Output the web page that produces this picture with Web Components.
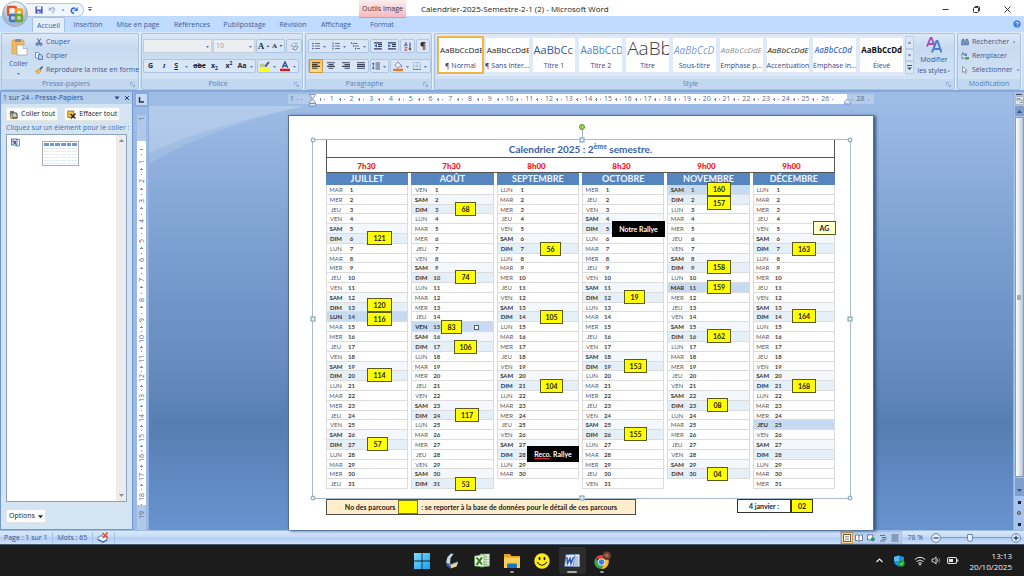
<!DOCTYPE html>
<html lang="fr">
<head>
<meta charset="utf-8">
<title>Calendrier-2025-Semestre-2-1 (2) - Microsoft Word</title>
<style>
html,body{margin:0;height:100%;overflow:hidden}
body{font:7px/10px "Open Sans","Noto Sans",sans-serif;color:#3a5795}
</style>
</head>
<body>
<word-app></word-app>
<script>
const RESET = `*{box-sizing:border-box}
button,input,select{font:inherit;color:inherit;margin:0;padding:0;border:0;background:none}
a{color:inherit;text-decoration:none}`;

function define(name, css, html, setup) {
  const t = document.createElement('template');
  t.innerHTML = `<style>${RESET}${css}</style>${typeof html === 'string' ? html : ''}`;
  customElements.define(name, class extends HTMLElement {
    connectedCallback() {
      if (this.shadowRoot) return;
      const root = this.attachShadow({ mode: 'open' });
      root.append(t.content.cloneNode(true));
      if (typeof html === 'function') root.innerHTML += html(this);
      if (setup) setup(this, root);
    }
  });
}

/* ---------- icons ---------- */
const ICONS = {
  office: ['0 0 26 26', `<defs><radialGradient id="g" cx=".5" cy=".3"><stop offset="0" stop-color="#fff"/><stop offset=".6" stop-color="#dfe7f1"/><stop offset="1" stop-color="#a9b9cf"/></radialGradient></defs><circle cx="13" cy="13" r="12.5" fill="url(#g)" stroke="#8fa5c4" stroke-width=".8"/><g fill="none" stroke-width="2.400"><rect x="6" y="6" width="8" height="8" rx="1" stroke="#e0561d"/><rect x="14" y="8.500" width="6" height="5.500" rx="1" stroke="#f0a21d"/><rect x="8" y="14" width="6" height="6" rx="1" stroke="#3f7cc7"/><rect x="14" y="14" width="6" height="6" rx="1" stroke="#6aa72d"/></g>`],
  save: ['0 0 9 9', `<path d="M.5.5h8v8h-8z" fill="#3f52a8"/><path d="M2 .5h5v3.500H2z" fill="#f4f6ff"/><path d="M2.500 5.500h4v3h-4z" fill="#c5cff0"/><path d="M5 6h1v2H5z" fill="#3f52a8"/>`],
  undo: ['0 0 9 9', `<path d="M2.500 3.500Q6 .5 7.300 3.500 7.500 6 4.500 8" fill="none" stroke="#9fb4d8" stroke-width="1.600"/><path d="M.8 1v4.200h4.200z" fill="#9fb4d8"/>`],
  redo: ['0 0 9 9', `<path d="M6 3A2.800 2.800 0 1 0 4.500 8" fill="none" stroke="#2f6fd6" stroke-width="1.800"/><path d="M8.700 1v4.500H4.200z" fill="#2f6fd6"/>`],
  down: ['0 0 5 5', `<path d="M1 2h3L2.500 4z" fill="#5b79ad"/>`],
  downdark: ['0 0 6 6', `<path d="M0 1.500h6L3 5z" fill="#222"/>`],
  more: ['0 0 5 7', `<path d="M0 1h5v1H0zM0 3.500h5L2.500 6z" fill="#3b4f7c"/>`],
  paste: ['0 0 18 18', `<rect x="2" y="2" width="12" height="14" rx="1" fill="#efb95c" stroke="#d39a43" stroke-width=".6"/><rect x="5" y="1" width="6" height="3" rx="1" fill="#8b8f97"/><path d="M7 7h6l4 3.500V17H7z" fill="#fff" stroke="#8f9cb5" stroke-width=".7"/><path d="M13 7v3.500h4" fill="#dde6f5" stroke="#8f9cb5" stroke-width=".6"/>`],
  cut: ['0 0 8 8', `<path d="M2.200.5 5 5.300M5.800.5 3 5.300" stroke="#5a6a8c" stroke-width="1"/><circle cx="2.200" cy="6.200" r="1.200" fill="none" stroke="#2c52a0"/><circle cx="5.800" cy="6.200" r="1.200" fill="none" stroke="#2c52a0"/>`],
  copy: ['0 0 8 8', `<path d="M.5.5h3l1.500 1.500v4h-4.500z" fill="#fff" stroke="#5576b8" stroke-width=".8"/><path d="M3.500 2.500h2.500l1.500 1.500v3.500h-4z" fill="#b9cdf0" stroke="#3d62ad" stroke-width=".8"/>`],
  brush: ['0 0 8 8', `<path d="M7.500.5 4.500 4" stroke="#4b5f94" stroke-width="1.600"/><path d="M.5 5 4.500 2.700l1.700 2.300L3 8z" fill="#f3bf45" stroke="#8d6b25" stroke-width=".4"/>`],
  clear: ['0 0 10 10', `<path d="M1 4.500 4 1.500h4L5 4.500z" fill="#fff" stroke="#6c7fa8" stroke-width=".7"/><path d="M3 8l3-3.500 3 1L6.500 9z" fill="#e7ecf7" stroke="#56678e" stroke-width=".8"/>`],
  bullets: ['0 0 8 8', `<path d="M3 1.500h5M3 4h5M3 6.500h5" stroke="#57698f" stroke-width=".9"/><path d="M.3 1h1.400v1.200H.3zM.3 3.500h1.400v1.200H.3zM.3 6h1.400v1.200H.3z" fill="#2b55b0"/>`],
  numbers: ['0 0 8 8', `<path d="M3 1.500h5M3 4h5M3 6.500h5" stroke="#57698f" stroke-width=".9"/><path d="M1 .3v2M1 3v2M1 5.700v2" stroke="#2b55b0" stroke-width=".9"/>`],
  levels: ['0 0 9 8', `<path d="M1.500 1.500h5M4 4h4M6 6.500h3" stroke="#57698f" stroke-width=".9"/><path d="M.3 0v2M2.600 3v2M4.600 5.700v2" stroke="#2b55b0" stroke-width=".9"/>`],
  outdent: ['0 0 8 8', `<path d="M0 .8h8M4 2.700h4M4 4.500h4M0 6.800h8" stroke="#333f5c" stroke-width="1.200"/><path d="M3 2v3.400L.3 3.700z" fill="#2b55b0"/>`],
  indent: ['0 0 8 8', `<path d="M0 .8h8M4 2.700h4M4 4.500h4M0 6.800h8" stroke="#333f5c" stroke-width="1.200"/><path d="M.3 2v3.400L3 3.700z" fill="#2b55b0"/>`],
  sort: ['0 0 8 9', `<path d="M.5 4l1.400-3.500L3.300 4M.8 3h2.200" stroke="#2b55b0" fill="none" stroke-width=".8"/><path d="M.6 5.200h2.600L.6 8.300h2.800" stroke="#b0323a" fill="none" stroke-width=".8"/><path d="M6 .5v7" stroke="#333" stroke-width=".9"/><path d="M4.500 6.500h3L6 8.800z" fill="#333"/>`],
  left: ['0 0 8 8', `<path d="M0 .8h8M0 2.600h5.500M0 4.400h8M0 6.200h5.500" stroke="#3c3527" stroke-width="1.100"/>`],
  center: ['0 0 8 8', `<path d="M0 .8h8M1.500 2.600h5M0 4.400h8M1.500 6.200h5" stroke="#3d4963" stroke-width="1.100"/>`],
  right: ['0 0 8 8', `<path d="M0 .8h8M2.500 2.600H8M0 4.400h8M2.500 6.200H8" stroke="#3d4963" stroke-width="1.100"/>`],
  justify: ['0 0 8 8', `<path d="M0 .8h8M0 2.600h8M0 4.400h8M0 6.200h8" stroke="#3d4963" stroke-width="1.100"/>`],
  spacing: ['0 0 8 8', `<path d="M3.500 1h4.500M3.500 3h4.500M3.500 5h4.500M3.500 7h4.500" stroke="#3d4963" stroke-width=".9"/><path d="M1.300 1v6" stroke="#2b55b0" stroke-width=".8"/><path d="M0 2.300h2.600L1.300.3zM0 5.700h2.600L1.300 7.700z" fill="#2b55b0"/>`],
  fill: ['0 0 11 11', `<path d="M2 4.500 5.500 1 9 4.500 5.500 8z" fill="#e8eefa" stroke="#5f7199" stroke-width=".8"/><path d="M9 4q1.500 2 .5 3.500-1-.5-.5-3.500z" fill="#2b55b0"/><path d="M0 8.500h11V11H0z" fill="#ee7a1c"/>`],
  borders: ['0 0 8 8', `<path d="M.5.5h7v7h-7zM4 .5v7M.5 4h7" fill="none" stroke="#a9bad6" stroke-width=".8"/><path d="M0 7.500h8" stroke="#7389b5"/>`],
  marker: ['0 0 11 11', `<path d="M5 5.500 9 .8l1.300 1L6.500 6.500z" fill="#4d5d86" stroke="#4d5d86" stroke-width=".6"/><path d="M0 3h5v3.500H0z" fill="#c3c68a"/><path d="M0 8h11v3H0z" fill="#ff0"/>`],
  fontcolor: ['0 0 11 11', `<path d="M0 8.500h11V11H0z" fill="#f40f0f"/><path d="M2.500 7.500 5.500.8l3 6.700M3.700 5.500h3.600" fill="none" stroke="#38538f" stroke-width="1.500"/>`],
  launcher: ['0 0 5 5', `<path d="M.5 3.500v-3h3M2 2l2.500 2.500M4.500 2.500v2h-2" fill="none" stroke="#7f9cc6" stroke-width=".7"/>`],
  styles: ['0 0 16 16', `<path d="M1 9.500 4.500 1h1L9 9.500M2.300 7h5" fill="none" stroke="#a64bb8" stroke-width="1.800"/><path d="M6 15.500 10.500 4h1L15.500 15.500M8 12h6" fill="none" stroke="#4a7fd0" stroke-width="2"/>`],
  find: ['0 0 8 7', `<path d="M.5 6.500V3L1.500.5h1.300L3.500 3v3.500zM4.500 6.500V3L5.200.5h1.300L7.500 3v3.500z" fill="#7690bf" stroke="#3e5b95" stroke-width=".5"/>`],
  replace: ['0 0 8 8', `<path d="M.5 3.500 1.800.5 3 3.500M4 1v2.500h1.500V2H4" stroke="#3e5b95" fill="none" stroke-width=".7"/><path d="M1 4.500v2h2" fill="none" stroke="#3e5b95" stroke-width=".7"/><path d="M4 5h4v2.500H4z" fill="#52a052"/>`],
  select: ['0 0 7 8', `<path d="M1 .5v6l1.600-1.400L3.700 7.500l1-.5-1-2.300H5.800z" fill="#fff" stroke="#6a7a9c" stroke-width=".7"/>`],
  min: ['0 0 9 9', `<path d="M1.500 4.500h6" stroke="#333" stroke-width="1"/>`],
  restore: ['0 0 9 9', `<rect x="1.500" y="2.500" width="5" height="5" rx="1" fill="none" stroke="#333"/><path d="M3 1.500h3.500Q7.500 1.500 7.500 3v3" fill="none" stroke="#333"/>`],
  close: ['0 0 9 9', `<path d="M1.500 1.500l6 6M7.500 1.500l-6 6" stroke="#333" stroke-width="1"/>`],
  help: ['0 0 9 9', `<circle cx="4.500" cy="4.500" r="4" fill="#3a78d8" stroke="#7ba6e8"/><path d="M3 3.500q1.500-2 3 0 0 1-1.500 1.500M4.500 6v1" stroke="#fff" fill="none"/>`],
  pasteall: ['0 0 9 9', `<path d="M1 1h4v3H1z" fill="#7d7350"/><path d="M1 3h7v5.500H2z" fill="#e9bd50" stroke="#6f6031" stroke-width=".8"/><path d="M3 3h4l1.500 4.500H4z" fill="#c6ccd6" stroke="#4d5873" stroke-width=".8"/>`],
  clearall: ['0 0 9 9', `<rect x=".8" y="1" width="6" height="6.500" fill="#f3c33c" stroke="#6f5a1d" stroke-width=".7"/><path d="M3.500 4l5 4.500M8.500 3.500 4 8.500" stroke="#26282e" stroke-width="1.300"/>`],
  clipword: ['0 0 9 9', `<path d="M4 1.500h4.500v6.500H5z" fill="#fff" stroke="#6c7ea6" stroke-width=".9"/><rect x=".5" y="1" width="5.500" height="6" fill="#dbe6fa" stroke="#3b5fae" stroke-width=".8"/><path d="M1.500 2.500h2v2h-2z" fill="#d4542a"/><path d="M3.300 3h1.700v3H2.500z" fill="#3a62b5"/>`],
  tabstop: ['0 0 6 6', `<path d="M1.500 0v5H6" fill="none" stroke="#333" stroke-width="1.500"/>`],
  hourglass: ['0 0 7 14', `<path d="M.5 1.500h6L3.500 6z" fill="#eef4fc" stroke="#7289b3" stroke-width=".8"/><path d="M3.500 6 6.500 9v1.500h-6V9zM.5 10.500h6v2.500h-6z" fill="#dce7f6" stroke="#7289b3" stroke-width=".8"/>`],
  rightindent: ['0 0 7 7', `<path d="M3.500 1 6.500 4v2h-6V4z" fill="#dce7f6" stroke="#7289b3" stroke-width=".8"/>`],
  spell: ['0 0 12 11', `<path d="M1 5l4-1.500 1 1.500 4-1v4L6 10 1 8z" fill="#f4f6fa" stroke="#566b9c" stroke-width=".8"/><path d="M1 7.500 6 10l4-2" fill="none" stroke="#2f60c0" stroke-width="1.200"/><path d="M5.500 1l5 5M10.500.5l-4.500 5.500" stroke="#f2472d" stroke-width="1.500"/>`],
  vprint: ['0 0 8 8', `<rect x=".5" y=".5" width="7" height="7" fill="#fff" stroke="#686353"/><path d="M2 2.500h4M2 4h4M2 5.500h4" stroke="#8b8573" stroke-width=".7"/>`],
  vread: ['0 0 8 8', `<path d="M4 2v5.500M.5 1Q3 .5 4 2 5 .5 7.500 1v5.500Q5 6 4 7.500 3 6 .5 6.500z" fill="#fff" stroke="#62728f" stroke-width=".9"/>`],
  vweb: ['0 0 9 8', `<rect x=".5" y=".5" width="6" height="5.500" fill="#fff" stroke="#62728f"/><circle cx="6.500" cy="5.500" r="2.300" fill="#2d8f8f"/>`],
  vplan: ['0 0 8 8', `<path d="M1 1.500h5M3 3.500h4.500M3 5.200h4.500M1 7h5" stroke="#5d6d8d" stroke-width="1"/>`],
  vdraft: ['0 0 8 8', `<path d="M.5 1h7M.5 3h7M.5 5h7M.5 7h7" stroke="#57678a" stroke-width="1.100"/>`],
  minus: ['0 0 10 10', `<circle cx="5" cy="5" r="4.400" fill="#e6effb" stroke="#6382b5"/><path d="M2.500 5h5" stroke="#33456d" stroke-width="1.300"/>`],
  plus: ['0 0 10 10', `<circle cx="5" cy="5" r="4.400" fill="#e6effb" stroke="#6382b5"/><path d="M2.500 5h5M5 2.500v5" stroke="#33456d" stroke-width="1.300"/>`],
  win: ['0 0 16 16', `<defs><linearGradient id="w" x2="1" y2="1"><stop offset="0" stop-color="#7fdcff"/><stop offset="1" stop-color="#18a0ee"/></linearGradient></defs><path d="M0 0h7.600v7.600H0zM8.400 0H16v7.600H8.400zM0 8.400h7.600V16H0zM8.400 8.400H16V16H8.400z" fill="url(#w)"/>`],
  moon: ['0 0 16 16', `<path d="M7 .5 3.500 4 2 9.500 4 14l2-2.500L6.500 5 9.500 1z" fill="#c9d6e6"/><path d="M3 9.500 7 11l6.500-2.500.5 1.500-7.500 3.500z" fill="#8ca3c4"/><path d="M2 9l3.500 2.500.5 4L3 13z" fill="#3f58b5"/><path d="M7 12.300 14 9.500l-1.500 4L6.500 15.500z" fill="#eadb95"/>`],
  excel: ['0 0 16 16', `<path d="M6 1h9.500v12L6 14z" fill="#e9f3e3" stroke="#7ea76a" stroke-width=".6"/><path d="M8 4h7M8 6.500h7M8 9h7M8 11.500h7M12 2v11" stroke="#8ab378" stroke-width=".7"/><path d="M.5 3 10 1.500v12.500L.5 13z" fill="#eef6e9" stroke="#4c8a36" stroke-width=".6"/><path d="M2.500 4.500 8 11.500M8 4.300l-5.500 7.500" stroke="#2e7d23" stroke-width="2"/>`],
  folder: ['0 0 18 16', `<path d="M1 1h6l1.500 2H17v12H1z" fill="#e3a321"/><path d="M1 4.500h16V15H1z" fill="#fccf57"/><path d="M4 15v-3.500q0-1 1-1h8q1 0 1 1V15z" fill="#1b74c4"/>`],
  smile: ['0 0 16 16', `<circle cx="8" cy="8" r="7.700" fill="#ffec1a"/><ellipse cx="5.500" cy="5.500" rx="1" ry="1.700" fill="#222"/><ellipse cx="10.500" cy="5.500" rx="1" ry="1.700" fill="#222"/><path d="M3 9Q8 15.500 13 9" fill="none" stroke="#222" stroke-width="1.100"/>`],
  word: ['0 0 16 16', `<path d="M6 1.500h9.500v12H6z" fill="#eef3fb" stroke="#8da6cf" stroke-width=".6"/><path d="M9 4h5.500M9 6h5.500M9 8h5.500M9 10h5.500M9 12h5.500" stroke="#5d80bd" stroke-width=".8"/><path d="M2 1.500h9L9 13.500H.5z" fill="#e3ecf9" stroke="#4a6fb5" stroke-width=".7"/><path d="M2.800 4l.7 6.500L6 5.500l1 5L9.500 4" fill="none" stroke="#2b57ab" stroke-width="1.500"/>`],
  chrome: ['0 0 20 20', `<path d="M9 11 3 7A7.500 7.500 0 0 1 15.500 8H9z" fill="#e8402f"/><path d="M9 12 2.600 7.500A7.500 7.500 0 0 0 8 19l4-6z" fill="#35a853"/><path d="M9 8h6.700A7.500 7.500 0 0 1 8.500 19L12 13z" fill="#fbc116"/><circle cx="9" cy="11.500" r="3.700" fill="#fff"/><circle cx="9" cy="11.500" r="2.900" fill="#3a7de8"/><circle cx="14.500" cy="5" r="4.500" fill="#6b3d2a"/><circle cx="14.500" cy="4.500" r="2" fill="#a56b50"/>`],
  chevron: ['0 0 9 9', `<path d="M1.500 6 4.500 3l3 3" fill="none" stroke="#f2f2f2" stroke-width="1.200"/>`],
  shield: ['0 0 12 12', `<path d="M6 .5 11 2v4q0 3.500-5 5.500Q1 9.500 1 6V2z" fill="#1b8fe0"/><path d="M6 .5V6H1V2z" fill="#54bdf5"/><circle cx="8.500" cy="8.500" r="3.200" fill="#17a32b"/><path d="M7 8.500l1.200 1.200 2-2.200" fill="none" stroke="#fff" stroke-width=".8"/>`],
  wifi: ['0 0 12 10', `<g fill="none" stroke="#e6e6e6" stroke-width="1"><path d="M.8 3.500q5.200-4.500 10.400 0M2.500 5.500q3.500-3 7 0M4.200 7.300q1.800-1.500 3.600 0"/></g><circle cx="6" cy="8.600" r="1" fill="#e6e6e6"/>`],
  sound: ['0 0 12 10', `<path d="M1 3.500h2L5.500 1v8L3 6.500H1z" fill="none" stroke="#e6e6e6"/><path d="M7 3.500q1 1.500 0 3" fill="none" stroke="#e6e6e6"/><path d="M8.700 2q2 3 0 6" fill="none" stroke="#777"/>`],
  battery: ['0 0 12 9', `<rect x=".6" y="1.500" width="9" height="6" rx="1.500" fill="none" stroke="#e6e6e6" stroke-width="1.100"/><rect x="2" y="3" width="4" height="3" fill="#e6e6e6"/><path d="M10.800 3.500v2" stroke="#e6e6e6" stroke-width="1.200"/>`],
  rulertoggle: ['0 0 9 9', `<rect x=".5" y=".5" width="8" height="8" rx="1" fill="#dfe3ea" stroke="#9aa0ac" stroke-width=".6"/><path d="M2 4V2.500h2.500V4zM4.500 6.500H7V4H5" fill="#fff" stroke="#737b8c" stroke-width=".8"/>`],
  up: ['0 0 7 7', `<path d="M1 5h5L3.500 2z" fill="currentColor"/>`],
  dn: ['0 0 7 7', `<path d="M1 2h5L3.500 5z" fill="currentColor"/>`],
  smallx: ['0 0 6 6', `<path d="M1 1l4 4M5 1 1 5" stroke="#1f418f" stroke-width="1"/>`],
  paneDown: ['0 0 6 6', `<path d="M.5 1.500h5L3 4.500z" fill="#1f418f"/>`]
};
define('ui-icon', `:host{display:inline-flex;flex:none;width:var(--w,8px);height:var(--h,var(--w,8px))}svg{width:100%;height:100%;display:block}`,
  el => { const [vb, body] = ICONS[el.getAttribute('name')]; return `<svg viewBox="${vb}" aria-hidden="true">${body}</svg>`; });
const icon = (n, w = 8, h = w) => `<ui-icon name="${n}" style="--w:${w}px;--h:${h}px"></ui-icon>`;

/* ---------- title bar and tabs ---------- */
define('title-bar', `
:host{display:grid;grid-template-columns:359px 1fr auto;height:16px;background:#fff;position:relative}
.qat{display:flex;align-items:center;gap:5px;margin-left:26px;padding-left:9px;width:58px;height:14px;margin-top:1px;border:1px solid #b4c8e2;border-left:0;border-radius:0 8px 8px 0;background:#f1f6fc}
.left{display:flex;align-items:center;gap:4px}
.mid{display:flex;align-items:stretch;gap:15px}
.ctx{width:47px;text-align:center;white-space:nowrap;color:#4b2b35;background:linear-gradient(#fbeef0,#f4b9bd);border-bottom:1px solid #ee8e93;line-height:17px}
h1{margin:0;font:8px/17px "Open Sans",sans-serif;color:#222}
.win{display:flex;align-items:center;gap:22px;padding-right:12px}
.qat button,.win button{display:flex}
`, `
<div class="left"><div class="qat"><button aria-label="Enregistrer">${icon('save', 8)}</button><button aria-label="Annuler">${icon('undo', 8)}</button><ui-icon name="down" style="--w:4px"></ui-icon><button aria-label="Rétablir">${icon('redo', 8)}</button></div>${icon('more', 4, 6)}</div>
<div class="mid"><div class="ctx">Outils Image</div><h1>Calendrier-2025-Semestre-2-1 (2) - Microsoft Word</h1></div>
<div class="win"><button aria-label="Réduire">${icon('min', 9)}</button><button aria-label="Restaurer">${icon('restore', 9)}</button><button aria-label="Fermer">${icon('close', 9)}</button></div>`);

define('office-button', `:host{position:absolute;left:2px;top:1px;z-index:3}button{display:flex}`,
  `<button aria-label="Bouton Office">${icon('office', 26)}</button>`);

define('ribbon-tabs', `
:host{display:flex;height:16px;background:#bfdbff;padding-left:32px;padding-right:3px;align-items:flex-end}
nav{display:flex;flex:1}
a{height:15px;line-height:16px;text-align:center;color:#3b5b9b}
.on{background:#e5effb;border:1px solid #a3c0e5;border-bottom:0;border-radius:2px 2px 0 0;line-height:15px}
ui-icon{margin-bottom:4px}
`, `<nav>${[['Accueil', 33], ['Insertion', 46], ['Mise en page', 54], ['Références', 54], ['Publipostage', 51], ['Révision', 46], ['Affichage', 40], ['Format', 52]]
    .map(([t, w], i) => `<a href="#" class="${i === 0 ? 'on' : ''}" style="width:${w}px">${t}</a>`).join('')}</nav>${icon('help', 8)}`);

/* ---------- ribbon ---------- */
define('ribbon-group', `
:host{display:flex;flex-direction:column;height:57px;border:1px solid #a8c3e2;border-radius:2px;background:linear-gradient(#dce8f6,#c7daef 25%,#d5e5f6);box-shadow:1px 0 0 #eaf3fc}
.body{flex:1;min-height:0;padding:4px 4px 0;display:flex}
.cap{height:10px;display:flex;align-items:center;background:#c1d8f0;color:#5a80b9;line-height:10px}
.cap span{flex:1;text-align:center}
ui-icon{margin-right:3px}
`, el => `<div class="body"><slot></slot></div><div class="cap"><span>${el.getAttribute('label')}</span>${el.hasAttribute('nolaunch') ? '' : icon('launcher', 5)}</div>`);

define('tool-btn', `
:host{display:inline-flex}
button{display:flex;align-items:center;justify-content:center;gap:2px;width:var(--bw,auto);height:14px;font-family:"Open Sans",sans-serif;color:#222b40;white-space:nowrap}
:host([on]) button{background:linear-gradient(#fbc06b,#ffd987);border:1px solid #c79a4b}
:host([link]) button{justify-content:flex-start;gap:3px;color:#3a5795}
`, el => `<button aria-label="${el.getAttribute('tip') || ''}"><slot></slot></button>`, (el, root) => { if (!el.getAttribute('tip')) root.querySelector('button').removeAttribute('aria-label'); });

define('tool-set', `:host{display:inline-flex;height:14px;border:1px solid #aec6e4;border-radius:2px;background:#d8e6f6;align-items:center}`, `<slot></slot>`);

const tb = (tip, w, content, extra = '') => `<tool-btn tip="${tip}" style="--bw:${w}px" ${extra}>${content}</tool-btn>`;
const d = icon('down', 5);

define('group-clipboard', `
:host{display:block}
ribbon-group{width:138px}
.big{display:flex;flex:none;flex-direction:column;align-items:center;width:25px;gap:3px;color:#3a5795;line-height:9px}
.list{display:flex;flex-direction:column;padding-left:4px;margin-top:-3px}
`, `<ribbon-group label="Presse-papiers"><button class="big">${icon('paste', 18)}<span>Coller</span>${icon('down', 5)}</button>
<div class="list"><tool-btn link>${icon('cut')}Couper</tool-btn><tool-btn link>${icon('copy')}Copier</tool-btn><tool-btn link>${icon('brush')}Reproduire la mise en forme</tool-btn></div></ribbon-group>`);

define('group-font', `
:host{display:block}
ribbon-group{width:162px}
.rows{display:flex;flex-direction:column;gap:6px;margin-left:-3px;margin-top:1px;white-space:nowrap}
.r{display:flex;gap:1px;height:14px}
.cb{position:relative;display:flex;height:14px}
.cb ui-icon{position:absolute;right:2px;top:5px}
select{appearance:none;width:69px;height:14px;border:1px solid #c4cfdc;background:#eceef1;color:#9aa0a8;padding-left:2px}
.n select{width:42px}
b,u{font:700 7px/10px "Open Sans"}i{font:italic 700 7px/10px "Liberation Serif"}
.se{font:700 9px/12px "Liberation Serif"}.ss{font:700 7px/12px "Liberation Serif"}
sub,sup{font-size:5px;line-height:0}
`, `<ribbon-group label="Police"><div class="rows">
<div class="r"><span class="cb"><select aria-label="Police"><option></option></select>${d}</span><span class="cb n"><select aria-label="Taille"><option>10</option></select>${d}</span>
<tool-set>${tb('Agrandir', 14, `<span class="se">A</span>${icon('up', 4)}`)}${tb('Réduire', 13, `<span class="ss">A</span>${icon('dn', 4)}`)}</tool-set>
<tool-set>${tb('Effacer', 14, icon('clear', 9))}</tool-set></div>
<div class="r"><tool-set>${tb('Gras', 13, '<b>G</b>')}${tb('Italique', 14, '<i>I</i>')}${tb('Souligné', 21, `<u>S</u>&nbsp;${d}`)}${tb('Barré', 15, '<b><s>abc</s></b>')}${tb('Indice', 15, '<b>x<sub>2</sub></b>')}${tb('Exposant', 14, '<b>x<sup>2</sup></b>')}${tb('Casse', 19, `<b>Aa</b>${d}`)}</tool-set>
<tool-set>${tb('Surlignage', 20, icon('marker', 10) + d)}${tb('Couleur', 20, icon('fontcolor', 10) + d)}</tool-set></div>
</div></ribbon-group>`);

define('group-paragraph', `
:host{display:block}
ribbon-group{width:127px}
.rows{display:flex;flex-direction:column;gap:6px;margin-left:-2px;margin-top:1px}
.r{display:flex;gap:1px;height:14px}
b{font:700 9px/12px "Open Sans"}
`, `<ribbon-group label="Paragraphe"><div class="rows">
<div class="r"><tool-set>${tb('Puces', 20, icon('bullets') + d)}${tb('Numérotation', 20, icon('numbers') + d)}${tb('Liste à plusieurs niveaux', 19, icon('levels', 9, 8) + d)}</tool-set>
<tool-set>${tb('Diminuer le retrait', 14, icon('outdent'))}${tb('Augmenter le retrait', 13, icon('indent'))}</tool-set>
<tool-set>${tb('Trier', 13, icon('sort', 8, 9))}</tool-set><tool-set>${tb('Afficher tout', 12, '<b>¶</b>')}</tool-set></div>
<div class="r"><tool-set>${tb('Gauche', 14, icon('left'), 'on')}${tb('Centrer', 15, icon('center'))}${tb('Droite', 15, icon('right'))}${tb('Justifier', 15, icon('justify'))}</tool-set>
<tool-set>${tb('Interligne', 17, icon('spacing') + d)}</tool-set>
<tool-set>${tb('Trame de fond', 20, icon('fill', 10) + d)}${tb('Bordures', 19, icon('borders') + d)}</tool-set></div>
</div></ribbon-group>`);

define('style-tile', `
:host{display:block;flex:1 1 43px;min-width:0}
button{display:flex;flex-direction:column;width:100%;height:34px;background:#fff;color:#3b3f86;text-align:left}
.s{height:22px;line-height:24px;padding-left:1px;white-space:nowrap;overflow:hidden;width:100%}
.l{display:flex;justify-content:center;height:12px;line-height:12px;white-space:nowrap;width:100%}
:host([on]) button{outline:2px solid #f0b545}
`, el => `<button><span class="s" style="${el.getAttribute('look')}">${el.getAttribute('sample')}</span><span class="l"><span><slot></slot></span></span></button>`);

const TILES = [
  ['AaBbCcDdE', '¶ Normal', 'font-size:8px;color:#222', 'on'],
  ['AaBbCcDdE', '¶ Sans inter...', 'font-size:8px;color:#222'],
  ['AaBbCc', 'Titre 1', 'font-size:11px;color:#2d5797'],
  ['AaBbCcD', 'Titre 2', 'font-size:10px;color:#4f81d0'],
  ['AaBb', 'Titre', 'font-size:19px;line-height:20px;font-weight:300;color:#323c4c'],
  ['AaBbCcD', 'Sous-titre', 'font-size:10px;font-style:italic;color:#7d9bd2'],
  ['AaBbCcDdE', 'Emphase p...', 'font-size:8px;font-style:italic;color:#909090'],
  ['AaBbCcDdE', 'Accentuation', 'font-size:8px;font-style:italic;color:#222'],
  ['AaBbCcDd', 'Emphase in...', 'font-size:8px;font-style:italic;font-weight:600;color:#4574cc'],
  ['AaBbCcDd', 'Élevé', 'font-size:8px;font-weight:700;color:#111']
];
define('group-styles', `
:host{display:block;flex:1;min-width:0}
.tiles{display:flex;flex:1;gap:4px;min-width:0;background:#deeafa;padding:2px 2px 0 2px;margin:-2px 0 0 -2px;height:40px}
.sc{display:flex;flex-direction:column;flex:none;width:9px;height:38px;margin-top:-2px}
.sc button{flex:1;display:flex;align-items:center;justify-content:center;border:1px solid #b8cfea;background:#dbe8f8;color:#4d6ca5}
.mod{display:flex;flex:none;flex-direction:column;align-items:center;width:38px;gap:2px;color:#3a5795;line-height:9px;margin:-1px -3px 0 1px}
.mod span{display:flex;align-items:center;white-space:nowrap}
`, `<ribbon-group label="Style"><div class="tiles">${TILES.map(t => `<style-tile sample="${t[0]}" look="${t[2]}" ${t[3] || ''}>${t[1]}</style-tile>`).join('')}</div>
<div class="sc"><button aria-label="Haut">${icon('up', 5)}</button><button aria-label="Bas">${icon('dn', 5)}</button><button aria-label="Autres">${icon('more', 5, 7)}</button></div>
<button class="mod">${icon('styles', 16)}<span>Modifier</span><span>les styles${icon('down', 4)}</span></button></ribbon-group>`);

define('group-edit', `
:host{display:block}
ribbon-group{width:64px}
.list{display:flex;flex-direction:column;margin:-3px -4px 0 -1px}
`, `<ribbon-group label="Modification" nolaunch><div class="list"><tool-btn link>${icon('find')}<span>Rechercher</span>${icon('down', 4)}</tool-btn><tool-btn link>${icon('replace')}<span>Remplacer</span></tool-btn><tool-btn link>${icon('select')}<span>Sélectionner</span>${icon('down', 4)}</tool-btn></div></ribbon-group>`);

define('ribbon-bar', `:host{display:flex;gap:2px;height:60px;padding:1px 3px 0 1px;background:linear-gradient(#d9e7f7,#c7dcf1);border-bottom:2px solid #86a8d6}`,
  `<group-clipboard></group-clipboard><group-font></group-font><group-paragraph></group-paragraph><group-styles></group-styles><group-edit></group-edit>`);

/* ---------- clipboard pane ---------- */
define('clip-pane', `
:host{display:flex;flex-direction:column;width:133px;flex:none;background:#d5e4f2;border:1px solid #6f97cf;border-width:0 1px 1px 1px}
header{display:flex;align-items:center;height:12px;background:#b3cdeb;padding:0 2px 0 2px;color:#2d4f8b;gap:4px;flex:none}
header h2{flex:1;margin:0;font:inherit}
.btns{display:flex;gap:6px;padding:3px 5px 0}
.btns button,.opt{display:flex;align-items:center;gap:3px;height:14px;padding:0 2px;background:#fdfdfb;color:#222;border:1px solid #e6e6e0;border-radius:2px;white-space:nowrap}
p{margin:0 0 0 5px;line-height:13px;color:#3f6fb5;white-space:nowrap}
.box{flex:1;margin:0 5px 0 5px;border:1px solid #8ea3bd;background:#fff;display:flex}
.item{flex:1;display:flex;padding:3px 4px;gap:22px}
.thumb{width:37px;height:25px;margin-top:3px;border:1px solid #a9aeb6;padding:1px;display:flex;gap:1px}
.thumb i{flex:1;border-top:3px solid #6f98cd;background:repeating-linear-gradient(#fff 0 2px,#e3ebf4 2px 3px)}
.sb{width:10px;background:#ececec;display:flex;flex-direction:column;justify-content:space-between;align-items:center;padding:2px 0;color:#8d8d8d}
.opt{align-self:flex-start;margin:7px 0 6px 5px}
`, `<header><h2>1 sur 24 - Presse-Papiers</h2>${icon('paneDown', 6)}${icon('smallx', 6)}</header>
<div class="btns"><button>${icon('pasteall', 9)}Coller tout</button><button>${icon('clearall', 9)}Effacer tout</button></div>
<p>Cliquez sur un élément pour le coller :</p>
<div class="box"><div class="item">${icon('clipword', 9)}<div class="thumb">${'<i></i>'.repeat(6)}</div></div><div class="sb">${icon('up', 7)}${icon('dn', 7)}</div></div>
<button class="opt">Options ${icon('downdark', 5)}</button>`);

/* ---------- rulers ---------- */
define('ruler-h', `
:host{display:flex;width:586px;height:10px;font-size:7px;line-height:10px;color:#5b6a86;position:relative}
.m{background:#b4cbea;display:flex;align-items:center;justify-content:center;gap:3px}
.a{width:24px;justify-content:flex-start;padding-left:2px}.z{width:27px;margin-left:auto}
.w{flex:1;background:#fff;display:flex;padding:0 14px 0 8px}
.c{flex:1 1 0;min-width:0;display:flex;align-items:center;justify-content:space-between}
.c::before{content:"";width:1px;height:3px;background:#7c8aa5}
.c i,.m i{width:1px;height:1px;background:#7c8aa5}
.c span{width:8px;display:flex;justify-content:center}
.l,.r{position:absolute}.l{left:21px;top:-1px}.r{left:556px;top:4px}
`, `<div class="m a"><span>1</span><i></i><i></i></div><div class="w">${Array.from({ length: 26 }, (_, n) => `<div class="c"><i></i><span>${n + 1}</span><i></i></div>`).join('')}</div><div class="m z"><i></i><span>28</span><i></i></div>
<div class="l">${icon('hourglass', 7, 14)}</div><div class="r">${icon('rightindent', 7)}</div>`);

define('ruler-v', `
:host{display:flex;flex-direction:column;align-items:center;width:15px;flex:none;background:#9cbae4;border-right:1px solid #8fb0df;font-size:7px;line-height:9px;color:#5b6a86}
.tab{width:15px;height:15px;flex:none;border:2px solid #87abe0;background:#c4d9f3;display:flex;align-items:center;justify-content:center}
.t,.e{width:9px;background:#b0c9ea;flex:none;display:flex;flex-direction:column;align-items:center;padding-top:2px}
.t{height:26px;margin-top:8px}.e{height:25px;padding-top:6px}
.w{width:9px;flex:1;background:#fff;display:flex;flex-direction:column;padding:8px 0 0}
.c{flex:1 1 0;min-height:0;display:flex;flex-direction:column;align-items:center;justify-content:space-between}
.c::before{content:"";height:1px;width:3px;background:#7c8aa5}
.c i{width:1px;height:1px;background:#7c8aa5}
span{writing-mode:vertical-rl;transform:rotate(180deg);max-height:9px}
`, `<div class="tab">${icon('tabstop', 6)}</div><div class="t"><span>1</span></div><div class="w">${Array.from({ length: 18 }, (_, n) => `<div class="c"><i></i><span>${n + 1}</span><i></i></div>`).join('')}</div><div class="e"><span>19</span></div>`);

/* ---------- document ---------- */
const DAYS = ['LUN', 'MAR', 'MER', 'JEU', 'VEN', 'SAM', 'DIM'];
define('month-table', `
:host{display:block;min-width:0;font-family:Lato,sans-serif}
table{display:block;border:0}
caption{display:block;height:12px;background:#5685c0;color:#f0f5fc;font:700 9px/12px Lato,sans-serif;text-align:center}
tbody{display:grid;grid-template-rows:repeat(31,minmax(0,1fr));height:304px}
tr{display:grid;grid-template-columns:18px 13px;border:1px solid #dcdcdc;border-top:0;font-size:6px;line-height:9px;color:#444;min-height:0}
td,th{padding:0;font-weight:400;text-align:center}
th{color:#5a5a5a}
td{font-weight:700}
.sat{background:#f4f8fc}.sun{background:#e4eff8}.off{background:#c6daf1}
.b th{font-weight:700;color:#333}
`, el => {
  const n = +el.getAttribute('days'), s = +el.getAttribute('start'), off = (el.getAttribute('off') || '').split(',').map(Number);
  let rows = '';
  for (let i = 1; i <= n; i++) {
    const w = (s + i - 1) % 7, o = off.includes(i);
    const k = o ? 'off b' : w === 5 ? 'sat b' : w === 6 ? 'sun b' : '';
    rows += `<tr class="${k}"><th scope="row">${DAYS[w]}</th><td>${i}</td></tr>`;
  }
  return `<table><caption>${el.getAttribute('name')}</caption><tbody>${rows}</tbody></table>`;
});

define('note-box', `
:host{position:absolute;left:var(--x);top:var(--y);width:var(--bw);height:14px;display:flex;align-items:center;justify-content:center;background:#ff0;border:1px solid #5a5a1c;color:#222;font:700 7px/12px Lato,sans-serif}
:host([kind=black]){background:#000;color:#fff;border-color:#000;height:16px}
:host([kind=pale]){background:#ffffcb}
`, `<slot></slot>`);

const NOTES = [
  [121, 79, 116, 24], [120, 79, 183, 24], [116, 79, 197, 24], [114, 79, 253, 24], [57, 79, 322, 20],
  [68, 167, 87, 20], [74, 167, 155, 20], [83, 153, 205, 20], [106, 166, 225, 22], [117, 167, 293, 23], [53, 167, 362, 20],
  [56, 252, 127, 20], [105, 252, 195, 22], [104, 252, 264, 22],
  [19, 336, 175, 20], [153, 336, 244, 22], [155, 336, 312, 22],
  [160, 419, 67, 23], [157, 419, 81, 23], [158, 419, 145, 23], [159, 419, 165, 23], [162, 419, 214, 23], ['08', 419, 283, 20], ['04', 419, 352, 20],
  [163, 504, 127, 23], [164, 504, 194, 23], [168, 504, 264, 23],
  ['AG', 525, 106, 22, 'pale'], ['Notre Rallye', 324, 106, 52, 'black'], ['<span style="text-decoration:underline #d22">Reco</span>. Rallye', 239, 331, 51, 'black']
];
const MONTHS = [['JUILLET', 31, 1, '14', '7h30'], ['AOÛT', 31, 4, '15', '7h30'], ['SEPTEMBRE', 30, 0, '', '8h00'], ['OCTOBRE', 31, 2, '', '8h30'], ['NOVEMBRE', 30, 5, '1,11', '9h00'], ['DÉCEMBRE', 31, 0, '25', '9h00']];

define('select-frame', `
:host{position:absolute;inset:23px 22px 31px 23px;border:1px solid #a9bccf;pointer-events:none}
i{position:absolute;width:5px;height:5px;background:#dff1f5;border:1px solid #7d9cae;translate:-50% -50%}
.o{border-radius:50%}
.g{background:#8fdc3c;border-color:#5f8f3a;width:6px;height:6px}
b{position:absolute;left:50%;top:-12px;height:12px;width:1px;background:#9db3c6}
`, `<b></b>${[[0, 0, 'o'], [50, 0], [100, 0, 'o'], [0, 50], [100, 50], [0, 100, 'o'], [50, 100], [100, 100, 'o']].map(([x, y, c]) => `<i class="${c || ''}" style="left:${x}%;top:${y}%"></i>`).join('')}<i class="o g" style="left:50%;top:-13px"></i>`);

define('doc-page', `
:host{display:block;position:relative;width:586px;flex:1;background:#fff;border:1px solid #5d7186;border-bottom:0;box-shadow:2px 1px 3px #33527f;font-family:Lato,sans-serif;color:#222}
.cal{margin:24px 38px 0 37px}
.head{border:1px solid #555;border-top:0}
h2{margin:0;height:18px;font:700 10px/19px Lato,sans-serif;text-align:center;color:#3a5fa5;border-bottom:1px solid #555}
sup{font-size:7px;line-height:0}
.times,.months{display:grid;grid-template-columns:repeat(6,minmax(0,1fr));column-gap:3px}
.times{height:14px;font:900 8px/16px Lato,sans-serif;color:#f6101a;text-align:center}
.times span{padding-right:3px}
.foot{display:flex;justify-content:space-between;margin-top:10px;font:700 7px/14px Lato,sans-serif}
.leg{display:flex;align-items:center;justify-content:center;width:310px;height:16px;border:1px solid #4c4c4c;background:#ffeecb;gap:3px;white-space:nowrap}
.leg b{width:20px;height:14px;background:#ff0;border:1px solid #77771c}
.jan{display:flex;height:14px;margin-right:22px;line-height:13px}
.jan div{border:1px solid #333;text-align:center;width:54px}
.jan div+div{width:22px;background:#ff0;border-left:1px solid #333}
.pt{position:absolute;left:185px;top:209px;width:5px;height:5px;border:1px solid #55606e;background:#fdfdf0}
`, `<div class="cal"><div class="head"><h2>Calendrier 2025 : 2<sup>ème</sup> semestre.</h2><div class="times">${MONTHS.map(m => `<span>${m[4]}</span>`).join('')}</div></div>
<div class="months">${MONTHS.map(m => `<month-table name="${m[0]}" days="${m[1]}" start="${m[2]}" off="${m[3]}"></month-table>`).join('')}</div>
<div class="foot"><div class="leg"><span>No des parcours</span><b></b><span>: se reporter à la base de données pour le détail de ces parcours</span></div><div class="jan"><div>4 janvier :</div><div>02</div></div></div></div>
${NOTES.map(([t, x, y, w, k]) => `<note-box style="--x:${x - 1}px;--y:${y - 1}px;--bw:${w + 1}px" ${k ? `kind="${k}"` : ''}><span>${t}</span></note-box>`).join('')}
<span class="pt"></span><select-frame></select-frame>`);

define('v-scroll', `
:host{display:flex;flex-direction:column;align-items:center;width:11px;flex:none;background:#a6c4ee;color:#3a4f7a;gap:1px;padding-top:2px;border-left:1px solid #8fb1e0}
.a{width:9px;height:10px;background:#7f9fcd;display:flex;align-items:center;justify-content:center}
.t{flex:1;width:9px;border:1px solid #8a9ab3;background:linear-gradient(90deg,#fff,#dde4ef 50%,#b9c7db);display:flex;align-items:center;justify-content:center}
.t i{width:4px;height:5px;background:#a3aab6}
.b{width:9px;height:18px;background:#7f9fcd;display:flex;align-items:flex-end;justify-content:center;padding-bottom:2px}
.n{height:33px;display:flex;flex-direction:column;justify-content:space-around;align-items:center}
.n i{width:3px;height:3px;background:#222}.n i:nth-child(2){border-radius:50%;width:4px;height:4px;background:#bbb;border:1px solid #444}
.s{width:6px;height:1px;background:#445}
`, `<span class="s"></span>${icon('rulertoggle', 9)}<div class="a">${icon('up', 7)}</div><div class="t"><i></i></div><div class="b">${icon('dn', 7)}</div><div class="n"><i></i><i></i><i></i></div>`);

define('work-area', `
:host{display:flex;flex:1;min-height:0;background:#9cbae4}
clip-pane{margin-right:1px}
.canvas{flex:1;min-width:0;display:flex;flex-direction:column;align-items:center;padding-top:2px;position:relative;background:linear-gradient(#9ebde6 0,#98b8e3 8%,#7b9fd0 35%,#6489bd 65%,#567eb2 76%,#5f89c1 88%,#6893cf)}
svg{position:absolute;left:0;top:14px}
ruler-h{margin-bottom:11px;flex:none}
`, `<clip-pane></clip-pane><ruler-v></ruler-v><div class="canvas"><svg width="160" height="60" viewBox="0 0 160 60" aria-hidden="true"><path d="M0 0H155Q60 20 0 47z" fill="#fff" opacity=".15"/><path d="M0 0H155Q60 22 0 58z" fill="#fff" opacity=".12"/></svg><ruler-h></ruler-h><doc-page></doc-page></div><v-scroll></v-scroll>`);

/* ---------- status bar ---------- */
define('status-bar', `
:host{display:flex;height:15px;flex:none;align-items:center;background:linear-gradient(#dbe9fb,#c4daf6 45%,#b2cdf2 55%,#cfe1f8);border-bottom:1px solid #4a5a70;border-top:1px solid #9cbce4;color:#34558f}
.c{height:12px;line-height:12px;padding:0 5px 0 4px;border-right:1px solid #a9c3e6}
.v{display:flex;margin-left:auto;background:#b9d1f1;border:1px solid #a4c0e6;height:13px;align-items:center}
.v button{width:12px;height:12px;display:flex;align-items:center;justify-content:center}
.v .on{background:#ffd694;border:1px solid #d29b45}
.z{display:flex;padding:0 8px 0 5px}
input{appearance:none;width:70px;height:11px;background:linear-gradient(#7f9ac4,#7f9ac4) center/100% 1px no-repeat}
input::-webkit-slider-thumb{appearance:none;width:6px;height:8px;background:#e9f1fb;border:1px solid #6a84b3;border-radius:1px 1px 3px 3px}
.zoom{display:flex;align-items:center;padding-right:3px}.zoom button{display:flex}
`, `<span class="c">Page : 1 sur 1</span><span class="c">Mots : 65</span><span class="c">${icon('spell', 12, 11)}</span>
<div class="v">${['vprint', 'vread', 'vweb', 'vplan', 'vdraft'].map((n, i) => `<button aria-label="Affichage ${i + 1}" class="${i ? '' : 'on'}">${icon(n)}</button>`).join('')}</div>
<span class="z">78 %</span><div class="zoom"><button aria-label="Zoom arrière">${icon('minus', 10)}</button><input type="range" aria-label="Zoom" min="10" max="146" value="66"><button aria-label="Zoom avant">${icon('plus', 10)}</button></div>`);

/* ---------- taskbar ---------- */
define('task-bar', `
:host{display:grid;grid-template-columns:1fr auto 1fr;align-items:center;height:31px;flex:none;background:#1c1c1c;color:#f4f4f4}
.apps{grid-column:2;display:flex;gap:3px}
.apps button{position:relative;width:27px;height:27px;display:flex;align-items:center;justify-content:center;border-radius:3px}
.on{background:#2d2d2d}
.run::after{content:"";position:absolute;bottom:1px;left:50%;translate:-50%;width:4px;height:2px;border-radius:1px;background:#9a9a9a}
.on.run::after{width:10px;background:#a8a8a8}
.tray{display:flex;align-items:center;justify-content:flex-end;gap:5px;padding-right:12px}
.tray ui-icon:nth-child(2){margin:0 4px}
time{font:8px/11px "Open Sans",sans-serif;text-align:right;margin-left:6px}
`, `<div class="apps">${[['win', 'Démarrer', ''], ['moon', 'Application', ''], ['excel', 'Excel', ''], ['folder', 'Explorateur', 'run'], ['smile', 'Sourire', ''], ['word', 'Word', 'on run'], ['chrome', 'Chrome', 'run']]
    .map(([n, l, c]) => `<button aria-label="${l}" class="${c}">${n === 'chrome' ? icon(n, 19) : n === 'folder' ? icon(n, 18, 16) : icon(n, 16)}</button>`).join('')}</div>
<div class="tray">${icon('chevron', 9)}${icon('shield', 12)}${icon('wifi', 12, 10)}${icon('sound', 11, 9)}${icon('battery', 12, 9)}<time>13:13<br>20/10/2025</time></div>`);

define('word-app', `:host{display:flex;flex-direction:column;height:100vh;position:relative;overflow:hidden}`,
  `<title-bar></title-bar><ribbon-tabs></ribbon-tabs><office-button></office-button><ribbon-bar></ribbon-bar><work-area></work-area><status-bar></status-bar><task-bar></task-bar>`);
</script>
</body>
</html>
